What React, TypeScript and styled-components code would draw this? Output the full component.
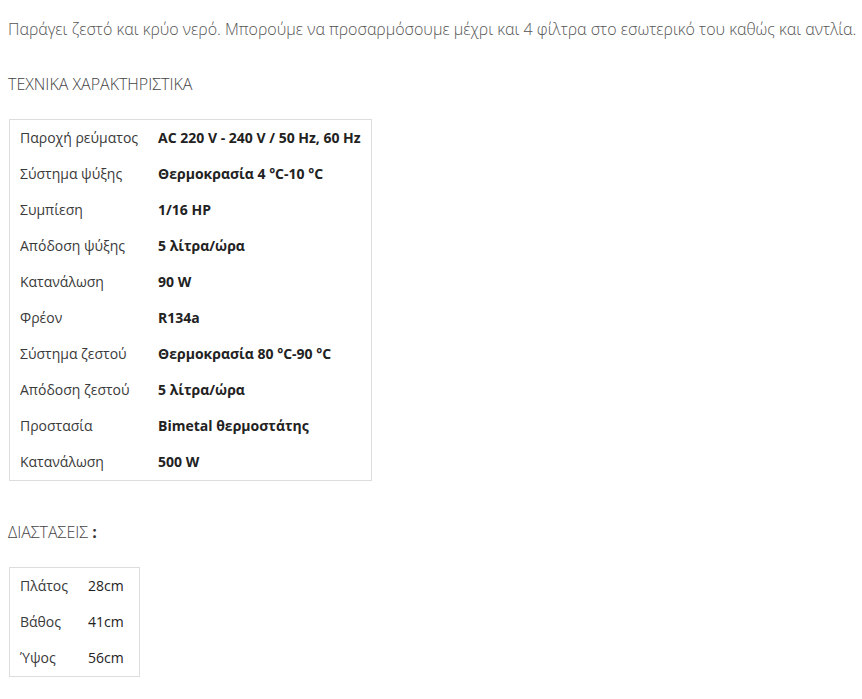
import styled, { createGlobalStyle } from 'styled-components';

const GlobalStyle = createGlobalStyle`
  body {
    margin: 0;
    background: #ffffff;
    font-family: 'Open Sans', 'DejaVu Sans', sans-serif;
  }
`;

interface SpecRow {
  label: string;
  value: string;
}

const specs: SpecRow[] = [
  { label: 'Παροχή ρεύματος', value: 'AC 220 V - 240 V / 50 Hz, 60 Hz' },
  { label: 'Σύστημα ψύξης', value: 'Θερμοκρασία 4 °C-10 °C' },
  { label: 'Συμπίεση', value: '1/16 HP' },
  { label: 'Απόδοση ψύξης', value: '5 λίτρα/ώρα' },
  { label: 'Κατανάλωση', value: '90 W' },
  { label: 'Φρέον', value: 'R134a' },
  { label: 'Σύστημα ζεστού', value: 'Θερμοκρασία 80 °C-90 °C' },
  { label: 'Απόδοση ζεστού', value: '5 λίτρα/ώρα' },
  { label: 'Προστασία', value: 'Bimetal θερμοστάτης' },
  { label: 'Κατανάλωση', value: '500 W' },
];

const dimensions: SpecRow[] = [
  { label: 'Πλάτος', value: '28cm' },
  { label: 'Βάθος', value: '41cm' },
  { label: 'Ύψος', value: '56cm' },
];

const App = () => (
  <StyledPage>
    <GlobalStyle />
    <StyledIntro>
      Παράγει ζεστό και κρύο νερό. Μπορούμε να προσαρμόσουμε μέχρι και 4 φίλτρα στο
      εσωτερικό του καθώς και αντλία.
    </StyledIntro>
    <StyledHeading>ΤΕΧΝΙΚΑ ΧΑΡΑΚΤΗΡΙΣΤΙΚΑ</StyledHeading>
    <StyledTable>
      <tbody>
        {specs.map((s, i) => (
          <tr key={`s-${i}`}>
            <StyledLabel>{s.label}</StyledLabel>
            <StyledValue $bold>{s.value}</StyledValue>
          </tr>
        ))}
      </tbody>
    </StyledTable>
    <StyledHeading>
      ΔΙΑΣΤΑΣΕΙΣ <strong>:</strong>
    </StyledHeading>
    <StyledTable>
      <tbody>
        {dimensions.map((d) => (
          <tr key={`d-${d.label}`}>
            <StyledLabel>{d.label}</StyledLabel>
            <StyledValue $padRight={15}>{d.value}</StyledValue>
          </tr>
        ))}
      </tbody>
    </StyledTable>
  </StyledPage>
);

const StyledPage = styled.div`
  display: flex;
  flex-direction: column;
  align-items: flex-start;
  padding: 16px 8px 0 8px;
  color: #444;
`;

const StyledIntro = styled.p`
  margin: 0 0 31px 0;
  font-size: 16px;
  font-weight: 300;
  line-height: 26px;
  color: #555;
  white-space: nowrap;
`;

const StyledHeading = styled.h4`
  margin: 0 0 24px 0;
  font-size: 16px;
  font-weight: 300;
  line-height: 22px;
  color: #444;

  strong {
    font-weight: 700;
    color: #333;
  }
`;

const StyledTable = styled.table`
  border-collapse: collapse;
  border: 1px solid #dddddd;
  margin: 0 0 40px 1px;
  font-size: 14px;
  line-height: 20px;

  &:last-child {
    margin-bottom: 0;
  }
`;

const StyledLabel = styled.td`
  padding: 8px 10px;
  color: #3a3a3a;
  white-space: nowrap;
`;

const StyledValue = styled.td<{ $bold?: boolean; $padRight?: number }>`
  padding: 8px ${(p) => p.$padRight ?? 10}px 8px 10px;
  color: #222;
  font-weight: ${(p) => (p.$bold ? 700 : 400)};
  white-space: nowrap;
`;

export default App;
